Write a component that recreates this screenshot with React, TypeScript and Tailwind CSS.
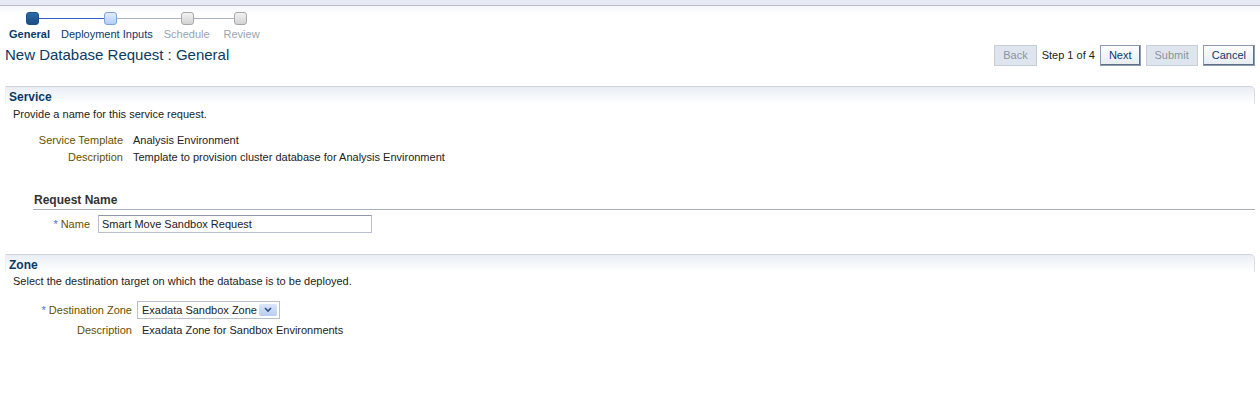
import React from "react";

const font = { fontFamily: '"Liberation Sans", Arial, sans-serif' };

type Step = { label: string; state: "current" | "next" | "off" };

const steps: Step[] = [
  { label: "General", state: "current" },
  { label: "Deployment Inputs", state: "next" },
  { label: "Schedule", state: "off" },
  { label: "Review", state: "off" },
];

const stopStyles: Record<Step["state"], string> = {
  current: "border-[#1c4f86] bg-gradient-to-b from-[#2a6aa8] to-[#194f86]",
  next: "border-[#7ea4e0] bg-gradient-to-b from-[#e2ecfd] to-[#b5cdf7]",
  off: "border-[#a9a9a9] bg-gradient-to-b from-[#f2f2f2] to-[#d3d3d3]",
};

const labelStyles: Record<Step["state"], string> = {
  current: "font-bold text-[#0b3a6b]",
  next: "text-[#0b3a6b]",
  off: "text-[#9aa3ad]",
};

function Train() {
  // left edge of each stop, relative to the train box
  const lefts = [17, 95, 172, 225];
  return (
    <div className="relative ml-[9px] h-[35px] w-[260px]">
      <div className="absolute left-[24px] top-[12px] h-px w-[78px] bg-[#2c62c8]" />
      <div className="absolute left-[102px] top-[12px] h-px w-[130px] bg-[#a9b3c3]" />
      {steps.map((s, i) => (
        <div
          key={s.label}
          className={`absolute top-[6px] h-[13px] w-[13px] rounded-[3px] border ${stopStyles[s.state]}`}
          style={{ left: lefts[i] }}
        />
      ))}
      <div className="absolute left-0 top-[21px] flex gap-[11px] text-[11px] leading-[14px]">
        {steps.map((s) => (
          <span key={s.label} className={`${labelStyles[s.state]} ${s.label === "Schedule" ? "mr-[3px]" : ""}`}>
            {s.label}
          </span>
        ))}
      </div>
    </div>
  );
}

function Btn({ children, disabled }: { children: React.ReactNode; disabled?: boolean }) {
  return (
    <button
      className={`h-[21px] border px-[8px] text-[11px] leading-none ${
        disabled
          ? "border-[#c5cdd8] bg-[#dfe5ee] text-[#8a94a1]"
          : "border-[#8c9bb0] bg-gradient-to-b from-[#fdfdfe] to-[#e6ecf4] text-[#0b3a6b] shadow-[inset_-1px_-1px_0_#5e6f88]"
      }`}
    >
      {children}
    </button>
  );
}

function SectionHeader({ title }: { title: string }) {
  return (
    <div className="mx-[5px] h-[18px] rounded-tr-[5px] border-l border-r border-t border-l-[#eef1f6] border-r-[#d9dde6] border-t-[#cdd3df] bg-gradient-to-b from-[#e9eef5] to-white px-[3px]">
      <span className="block text-[12px] font-bold leading-[21px] text-[#0b3a5f]">{title}</span>
    </div>
  );
}

function Field({
  label,
  value,
  width,
  gap,
  required,
}: {
  label: string;
  value: React.ReactNode;
  width: number;
  gap: number;
  required?: boolean;
}) {
  return (
    <div className="flex min-h-[17px] items-center text-[11px] leading-[17px]">
      <div className="shrink-0 text-right text-[#665000]" style={{ width, paddingRight: gap }}>
        {required && <span className="mr-[3px] text-[#3e76c4]">*</span>}
        {label}
      </div>
      <div className="text-[#222]">{value}</div>
    </div>
  );
}

export default function App() {
  return (
    <div className="h-[404px] w-[1260px] bg-white" style={font}>
      <div className="h-[5px] bg-[#e6e9f6]" />
      <div className="h-px bg-[#b9bdc9]" />
      <div className="bg-gradient-to-b from-[#f4f6fb] to-white to-[8px]">
        <Train />
      </div>

      <div className="flex h-[25px] items-end justify-between px-[5px]">
        <h1 className="pb-[2px] text-[15px] leading-[18px] text-[#0b3a5f]">New Database Request : General</h1>
        <div className="flex items-center gap-[5px]">
          <Btn disabled>Back</Btn>
          <span className="text-[11px] text-[#222]">Step 1 of 4</span>
          <Btn>Next</Btn>
          <Btn disabled>Submit</Btn>
          <Btn>Cancel</Btn>
        </div>
      </div>

      <div className="mt-[20px]">
        <SectionHeader title="Service" />
        <p className="ml-[13px] mt-[3px] text-[11px] leading-[14px] text-[#222]">Provide a name for this service request.</p>
        <div className="mt-[11px] flex flex-col">
          <Field label="Service Template" value="Analysis Environment" width={133} gap={10} />
          <Field label="Description" value="Template to provision cluster database for Analysis Environment" width={133} gap={10} />
        </div>

        <div className="ml-[33px] mr-[5px] mt-[27px] border-b border-[#a8b1c2] pb-[1px]">
          <span className="ml-px block text-[12px] font-bold leading-[15px] text-[#333]">Request Name</span>
        </div>
        <div className="mt-[5px]">
          <Field
            label="Name"
            required
            width={98}
            gap={8}
            value={
              <div className="h-[18px] w-[274px] border border-[#b9c0cb] border-t-[#8f98a5] bg-white px-[3px] text-[11px] leading-[16px] text-[#222]">
                Smart Move Sandbox Request
              </div>
            }
          />
        </div>
      </div>

      <div className="mt-[21px]">
        <SectionHeader title="Zone" />
        <p className="ml-[13px] mt-[2px] text-[11px] leading-[14px] text-[#222]">Select the destination target on which the database is to be deployed.</p>
        <div className="mt-[13px] flex flex-col gap-[3px]">
          <Field
            label="Destination Zone"
            required
            width={137}
            gap={5}
            value={
              <div className="flex h-[18px] w-[143px] items-center justify-between border border-[#b9c0cb] bg-white pl-[4px] pr-[2px] text-[11px] text-[#222]">
                <span>Exadata Sandbox Zone</span>
                <span className="flex h-[12px] w-[18px] items-center justify-center rounded-[2px] bg-gradient-to-b from-[#dbe6f8] to-[#b9cdf0]">
                  <svg width="8" height="6" viewBox="0 0 8 6">
                    <path d="M1 1 L4 4 L7 1" fill="none" stroke="#2a4f8a" strokeWidth="1.6" />
                  </svg>
                </span>
              </div>
            }
          />
          <Field label="Description" value={<span className="ml-[5px]">Exadata Zone for Sandbox Environments</span>} width={137} gap={5} />
        </div>
      </div>
    </div>
  );
}
